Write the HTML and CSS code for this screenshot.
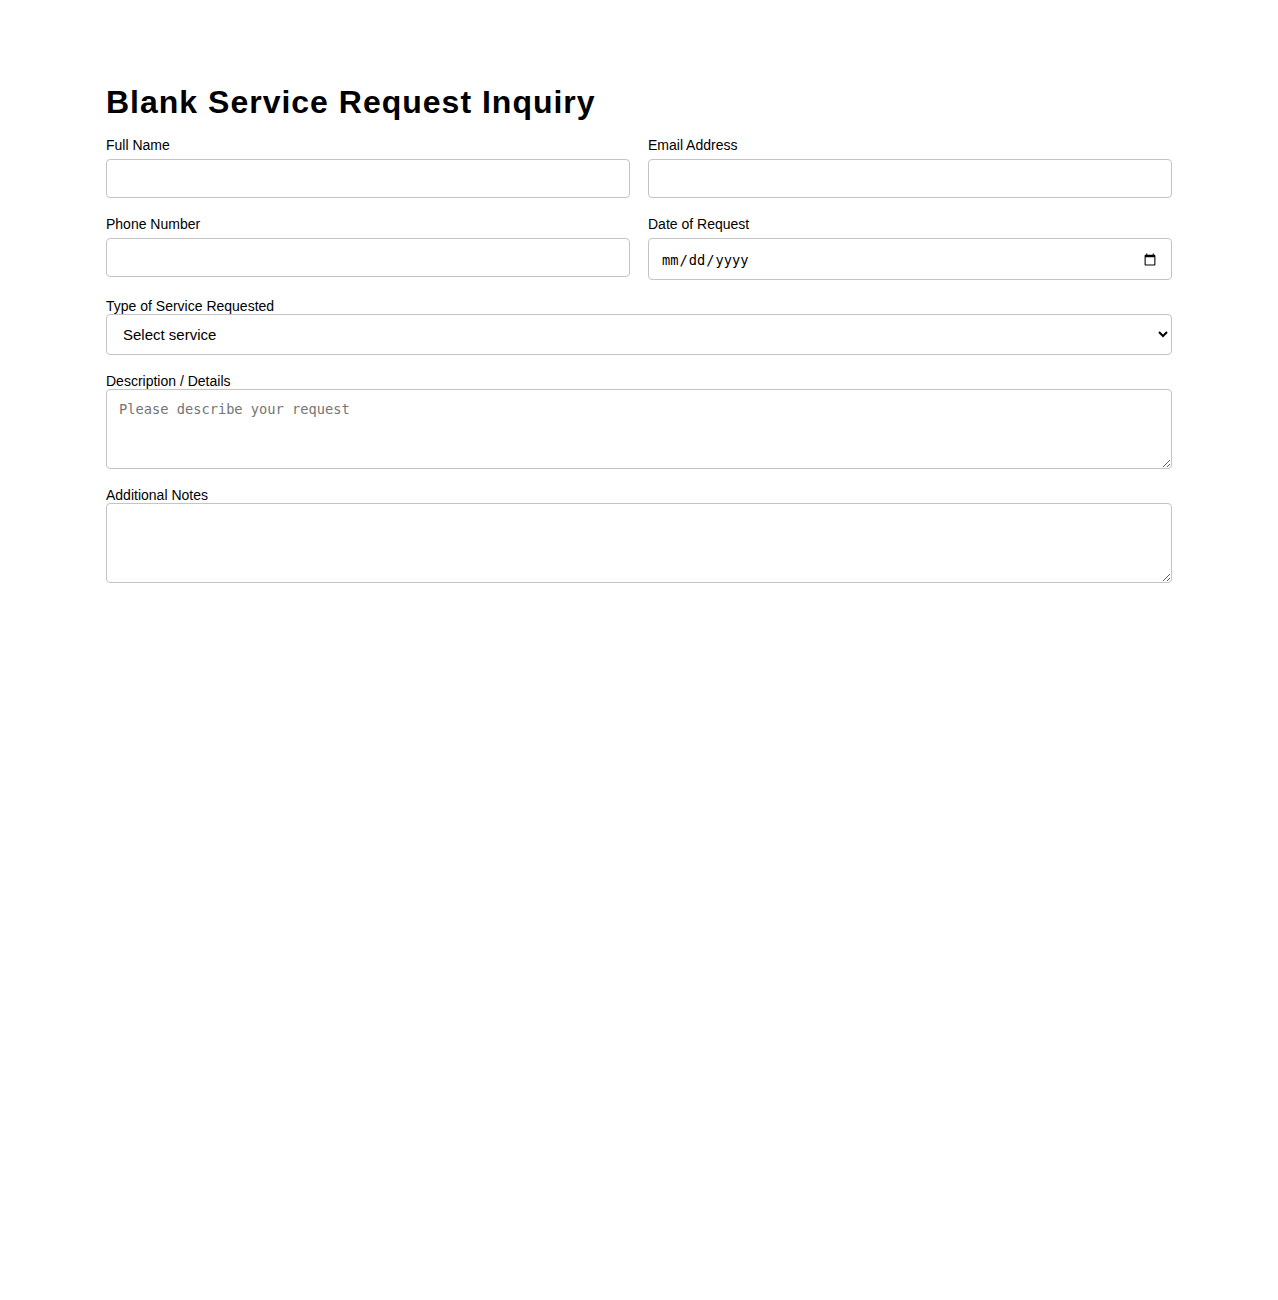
FILE: index.html
```html
<!DOCTYPE html>
<html lang="en">
<head>
<meta charset="UTF-8" />
<meta name="viewport" content="width=device-width, initial-scale=1.0"/>
<title>Blank Service Request Inquiry</title>
<link rel="stylesheet" href="styles.css">
</head>
<body>

<!-- Service request form -->
<div id="form-container">
  <h1 id="form-title">Blank Service Request Inquiry</h1>
  <form id="request-form">
    <div class="form-row">
      <div class="form-field">
        <label for="full-name">Full Name</label>
        <input type="text" id="full-name" class="text-input"/>
      </div>
      <div class="form-field">
        <label for="email">Email Address</label>
        <input type="email" id="email" class="text-input"/>
      </div>
    </div>
    <div class="form-row">
      <div class="form-field">
        <label for="phone">Phone Number</label>
        <input type="tel" id="phone" class="text-input"/>
      </div>
      <div class="form-field">
        <label for="request-date">Date of Request</label>
        <input type="date" id="request-date" class="date-input"/>
      </div>
    </div>
    <div class="form-block">
      <label for="service-type">Type of Service Requested</label>
      <select id="service-type" class="select-input">
        <option>Select service</option>
        <option>Installation</option>
        <option>Repair</option>
        <option>Maintenance</option>
        <option>Consultation</option>
      </select>
    </div>
    <div class="form-block">
      <label for="description">Description / Details</label>
      <textarea id="description" class="area-input" placeholder="Please describe your request"></textarea>
    </div>
    <div class="form-block">
      <label for="notes">Additional Notes</label>
      <textarea id="notes" class="area-input"></textarea>
    </div>
  </form>
</div>

</body>
</html>
```

FILE: styles.css
```css
body {
  margin: 0;
  font-family: "Liberation Sans", Arial, sans-serif;
  color: #000;
  background: #fff;
}

#form-container {
  width: 1066px;
  margin: 0 auto;
  padding-top: 84px;
}

#form-title {
  margin: 0 0 16px 0;
  font-size: 32px;
  line-height: 37px;
  font-weight: bold;
  letter-spacing: 1px;
}

label {
  display: block;
  font-size: 14px;
  line-height: 16px;
}

/* Two-column rows */
.form-row {
  display: grid;
  grid-template-columns: 1fr 1fr;
  column-gap: 18px;
  margin-bottom: 18px;
}
.form-field label {
  margin-bottom: 6px;
}

/* Full-width fields */
.form-block {
  margin-bottom: 18px;
}

.text-input,
.date-input,
.select-input,
.area-input {
  display: block;
  width: 100%;
  box-sizing: border-box;
  margin: 0;
  border: 1px solid #c4c4c4;
  border-radius: 4px;
  background: #fff;
  color: #000;
}

.text-input {
  height: 39px;
  padding: 10px 12px;
  font-size: 14px;
  font-family: "Liberation Sans", Arial, sans-serif;
}

.date-input {
  height: 42px;
  padding: 11px 12px 9px 12px;
  font-family: "DejaVu Sans Mono", monospace;
  font-size: 13.7px;
}

.select-input {
  height: 41px;
  padding: 0 12px;
  font-family: "Liberation Sans", Arial, sans-serif;
  font-size: 15px;
}

.area-input {
  height: 80px;
  padding: 11px 12px 10px 12px;
  font-family: "DejaVu Sans Mono", monospace;
  font-size: 13.7px;
  line-height: 17px;
  resize: vertical;
}
.area-input::placeholder {
  color: #757575;
}
```
